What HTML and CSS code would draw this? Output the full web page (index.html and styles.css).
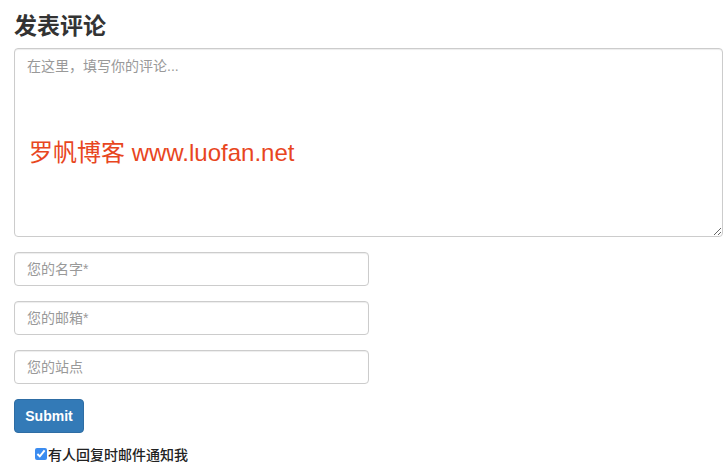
FILE: index.html
```html
<!DOCTYPE html>
<html lang="zh-CN">
<head>
<meta charset="utf-8">
<title>发表评论</title>
<link rel="stylesheet" href="styles.css">
</head>
<body>
<div class="respond">
  <h3 class="title">发表评论</h3>
  <form class="comment-form">
    <div class="textarea-wrap">
      <textarea class="form-control comment-text" placeholder="在这里，填写你的评论..."></textarea>
      <span class="watermark">罗帆博客 www.luofan.net</span>
    </div>
    <div class="fields">
      <input class="form-control field" type="text" placeholder="您的名字*">
      <input class="form-control field" type="text" placeholder="您的邮箱*">
      <input class="form-control field" type="text" placeholder="您的站点">
    </div>
    <button class="btn-submit" type="button">Submit</button>
    <label class="notify"><input class="notify-box" type="checkbox" checked>有人回复时邮件通知我</label>
  </form>
</div>
</body>
</html>
```

FILE: styles.css
```css
* { box-sizing: border-box; }
html, body { margin: 0; padding: 0; background: #fff; }
body {
  font-family: "Liberation Sans", "Noto Sans CJK SC", sans-serif;
  font-size: 14px;
  color: #333;
}
.respond { padding: 0 14px; width: 723px; }
.title {
  margin: 0;
  padding-top: 11px;
  font-size: 23px;
  line-height: 27px;
  font-weight: 700;
  color: #333;
  font-family: "Noto Sans CJK SC", sans-serif;
}
.comment-form { display: flex; flex-direction: column; align-items: flex-start; }
.textarea-wrap { position: relative; width: 709px; margin-top: 10px; }
.form-control {
  display: block;
  border: 1px solid #ccc;
  border-radius: 4px;
  background: #fff;
  box-shadow: inset 0 1px 1px rgba(0,0,0,.075);
  font-family: "Liberation Sans", "Noto Sans CJK SC", sans-serif;
  font-size: 14px;
  color: #555;
  outline: none;
}
.form-control::placeholder { color: #999; }
.comment-text {
  width: 709px;
  height: 189px;
  padding: 7px 12px;
  font-size: 14px;
  line-height: 20px;
  resize: both;
}
.watermark {
  position: absolute;
  left: 15px;
  top: 90px;
  font-size: 24px;
  line-height: 30px;
  color: #e8461e;
  font-family: "Liberation Sans", "Noto Sans CJK SC", sans-serif;
  pointer-events: none;
}
.fields { display: flex; flex-direction: column; gap: 15px; margin-top: 15px; }
.field {
  width: 355px;
  height: 34px;
  padding: 6px 12px;
}
.btn-submit {
  margin-top: 15px;
  width: 70px;
  height: 34px;
  border: 1px solid #2e6da4;
  border-radius: 4px;
  background: #337ab7;
  color: #fff;
  font-family: "Liberation Sans", sans-serif;
  font-weight: 700;
  font-size: 14px;
  padding: 0;
}
.notify {
  display: flex;
  align-items: center;
  margin-top: 13px;
  margin-left: 21px;
  font-size: 14px;
  line-height: 16px;
  font-weight: 500;
  color: #222;
  font-family: "Noto Sans CJK SC", sans-serif;
}
.notify-box {
  width: 12px;
  height: 12px;
  margin: 0 1px 0 0;
  accent-color: #3b8cf0;
}
```
